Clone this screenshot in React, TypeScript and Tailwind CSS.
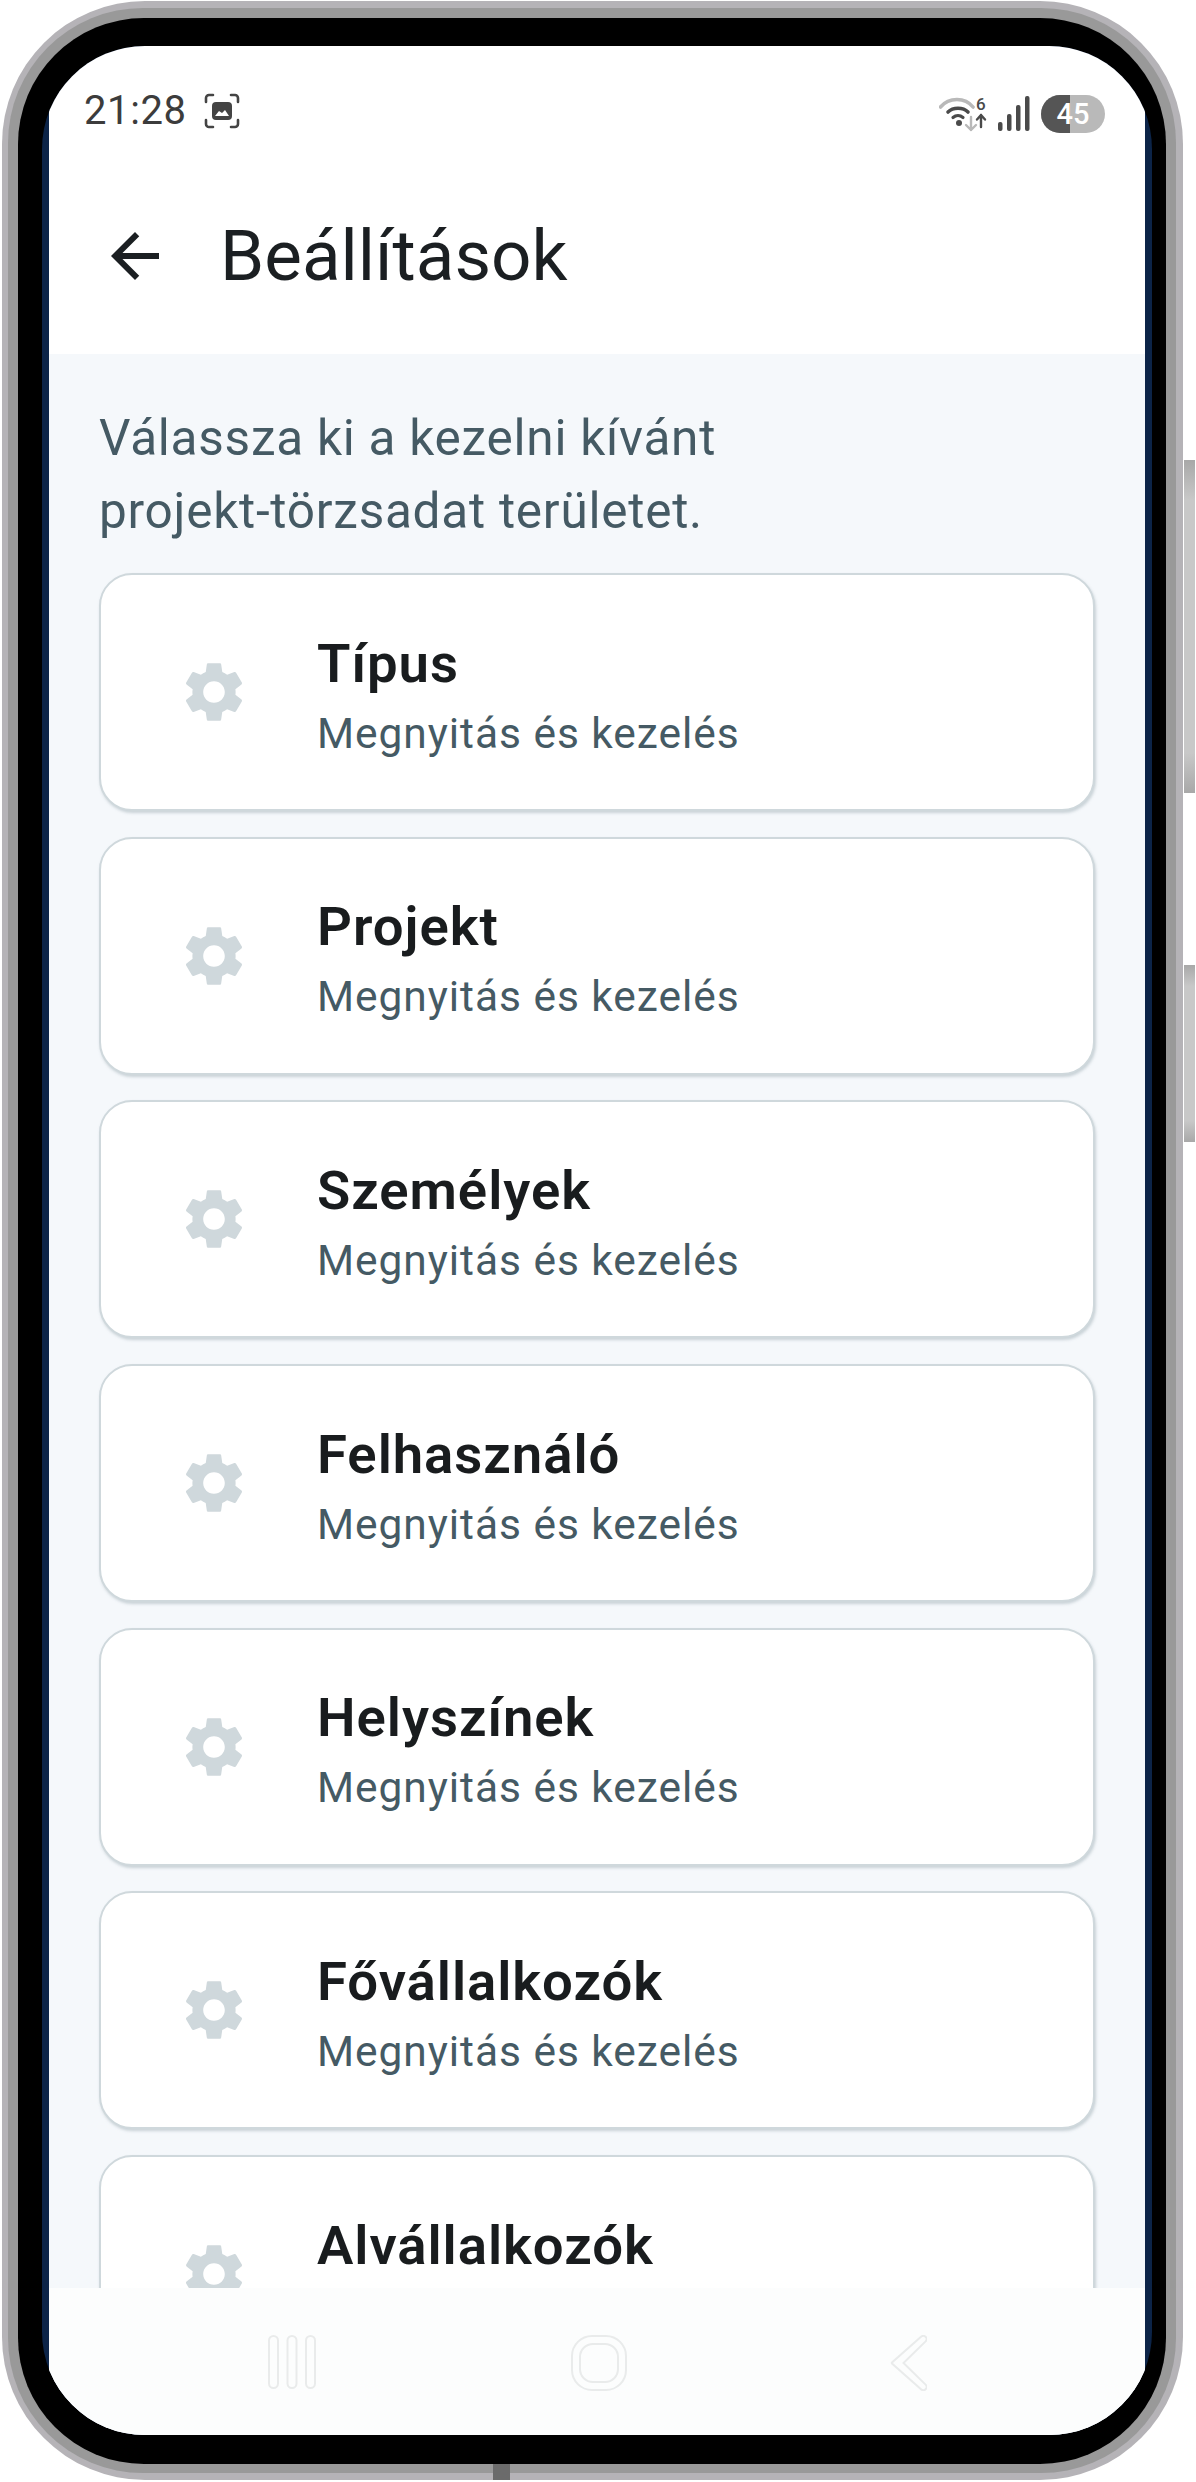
const items = ["Típus", "Projekt", "Személyek", "Felhasználó", "Helyszínek", "Fővállalkozók", "Alvállalkozók"];

function Gear() {
  return (
    <svg viewBox="0 0 24 24" className="h-[72px] w-[72px] shrink-0 fill-[#cfd8dc]">
      <path d="M19.14 12.94c.04-.3.06-.61.06-.94 0-.32-.02-.64-.07-.94l2.03-1.58c.18-.14.23-.41.12-.61l-1.92-3.32c-.12-.22-.37-.29-.59-.22l-2.39.96c-.5-.38-1.03-.7-1.62-.94l-.36-2.54c-.04-.24-.24-.41-.48-.41h-3.84c-.24 0-.43.17-.47.41l-.36 2.54c-.59.24-1.13.57-1.62.94l-2.39-.96c-.22-.08-.47 0-.59.22L2.74 8.87c-.12.21-.08.47.12.61l2.03 1.58c-.05.3-.09.63-.09.94s.02.64.07.94l-2.03 1.58c-.18.14-.23.41-.12.61l1.92 3.32c.12.22.37.29.59.22l2.39-.96c.5.38 1.03.7 1.62.94l.36 2.54c.05.24.24.41.48.41h3.84c.24 0 .44-.17.47-.41l.36-2.54c.59-.24 1.13-.56 1.62-.94l2.39.96c.22.08.47 0 .59-.22l1.92-3.32c.12-.22.07-.47-.12-.61l-2.01-1.58zM12 15.6c-1.98 0-3.6-1.62-3.6-3.6s1.62-3.6 3.6-3.6 3.6 1.62 3.6 3.6-1.62 3.6-3.6 3.6z" />
    </svg>
  );
}

function StatusBar() {
  return (
    <div className="flex h-[90px] shrink-0 items-end justify-between pl-[35px] pr-[40px]">
      <div className="flex items-center gap-[17px] pb-[5px]">
        <span className="text-[40px] leading-[40px] font-normal tracking-[0.6px] text-[#3c3c3c]">21:28</span>
        <svg viewBox="0 0 36 36" className="h-[36px] w-[36px]" fill="none">
          <path d="M2 9V5a3 3 0 0 1 3-3h4M27 2h4a3 3 0 0 1 3 3v4M34 27v4a3 3 0 0 1-3 3h-4M9 34H5a3 3 0 0 1-3-3v-4" stroke="#444444" strokeWidth="2.6" strokeLinecap="round" />
          <rect x="8" y="9" width="20" height="18" rx="4" fill="#444444" />
          <path d="M11 23l4-5 3 2 3-3 4 6z" fill="#ffffff" />
        </svg>
      </div>
      <div className="flex items-center gap-[11px] pb-[3px]">
        <svg viewBox="0 0 48 38" className="h-[38px] w-[48px]" fill="none">
          <path d="M1.5 12C10 2 26 2 34 12" stroke="#b9b9b9" strokeWidth="3.6" strokeLinecap="round" />
          <path d="M9 17c5-5 15-5 20 0" stroke="#4a4a4a" strokeWidth="3.6" strokeLinecap="round" />
          <path d="M14 22.5c3-2.5 7-2.5 10 0" stroke="#4a4a4a" strokeWidth="3.2" strokeLinecap="round" />
          <circle cx="20" cy="28" r="3" fill="#4a4a4a" />
          <path d="M32 22v13M27 30l5 5 5-5" stroke="#b9b9b9" strokeWidth="2.4" strokeLinecap="round" strokeLinejoin="round" />
          <path d="M42 32V20M38 24.5l4-4.5 4 4.5" stroke="#4a4a4a" strokeWidth="2.4" strokeLinecap="round" strokeLinejoin="round" />
          <text x="37" y="15" fontSize="17" fontWeight="500" fill="#4a4a4a" fontFamily="Roboto, sans-serif">6</text>
        </svg>
        <svg viewBox="0 0 32 36" className="h-[36px] w-[32px]" fill="#4a4a4a">
          <rect x="0" y="26" width="4.5" height="9" rx="2" />
          <rect x="9" y="18" width="4.5" height="17" rx="2" />
          <rect x="18" y="9" width="4.5" height="26" rx="2" />
          <rect x="27" y="0" width="4.5" height="35" rx="2" />
        </svg>
        <div className="relative flex h-[38px] w-[64px] overflow-hidden rounded-full bg-[#b9b9b9]">
          <div className="h-full w-[29px] bg-[#555555]" />
          <span className="absolute inset-0 text-center text-[29px] leading-[38px] font-medium text-white">45</span>
        </div>
      </div>
    </div>
  );
}

function Card({ title }: { title: string }) {
  return (
    <div className="flex h-[238px] shrink-0 items-center gap-[67px] rounded-[33px] border-2 border-[#cfd8dc] bg-white pl-[77px] shadow-[1px_2px_3px_rgba(120,140,150,0.35)]">
      <Gear />
      <div className="flex flex-col pt-[12px]">
        <span className="text-[54.5px] leading-[60px] font-semibold tracking-[0.95px] text-[#191c1e]">{title}</span>
        <span className="mt-[11px] text-[42.5px] leading-[60px] tracking-[0.95px] text-[#455a64]">Megnyitás és kezelés</span>
      </div>
    </div>
  );
}

function NavBar() {
  return (
    <div className="flex h-[147px] shrink-0 items-start bg-[#fcfdfd] pt-[47px] pl-[219px]">
      <svg viewBox="0 0 48 54" className="h-[54px] w-[48px]" fill="none" stroke="#e9ebeb" strokeWidth="2">
        <rect x="1" y="1" width="9" height="52" rx="4.5" />
        <rect x="19.5" y="1" width="9" height="52" rx="4.5" />
        <rect x="38" y="1" width="9" height="52" rx="4.5" />
      </svg>
      <svg viewBox="0 0 56 56" className="ml-[255px] h-[56px] w-[56px]" fill="none" stroke="#e9ebeb" strokeWidth="2">
        <rect x="1" y="1" width="54" height="54" rx="20" />
        <rect x="9" y="9" width="38" height="38" rx="13" />
      </svg>
      <svg viewBox="0 0 38 56" className="ml-[262px] h-[56px] w-[38px]" fill="none" stroke="#e9ebeb" strokeWidth="2">
        <path d="M32 1.8a3.2 3.2 0 0 1 4.6 4.6L14.5 28l22.1 21.6a3.2 3.2 0 0 1-4.6 4.6L3 28.6a1 1 0 0 1 0-1.2z" />
      </svg>
    </div>
  );
}

export default function App() {
  return (
    <div className="relative h-[2482px] w-[1196px] overflow-hidden bg-white font-['Roboto',sans-serif]">
      {/* side buttons */}
      <div className="absolute left-[1184px] top-[460px] h-[333px] w-[11px] bg-[linear-gradient(#a8a8a8,#c8c8c8_12%,#c8c8c8_88%,#a8a8a8)]" />
      <div className="absolute left-[1184px] top-[965px] h-[177px] w-[11px] bg-[linear-gradient(#a8a8a8,#c8c8c8_12%,#c8c8c8_88%,#a8a8a8)]" />

      {/* phone frame */}
      <div className="ml-[2px] mt-[1px] h-[2479px] w-[1181px] rounded-[143px] bg-[#b5b3b7] pb-[7px] pl-[6px] pr-[7px] pt-[7px]">
        <div className="h-full w-full rounded-[135px] bg-[#999999] pb-[9px] pl-[10px] pr-[10px] pt-[10px]">
          <div className="h-full w-full rounded-[126px] bg-black pb-[29px] pl-[24px] pr-[14px] pt-[28px]">
            <div className="h-full w-full overflow-hidden rounded-[103px] bg-[#0c2448] px-[7px]">
              <div className="flex h-full w-full flex-col bg-white">
                <StatusBar />
                <div className="flex h-[218px] shrink-0 items-start pl-[50px] pt-[84px]">
                  <svg viewBox="0 0 24 24" className="h-[72px] w-[72px] fill-[#1b1f22]">
                    <path d="M20 11H7.83l5.59-5.59L12 4l-8 8 8 8 1.41-1.41L7.83 13H20v-2z" />
                  </svg>
                  <h1 className="ml-[49px] mt-[-7px] text-[71px] leading-[86px] font-normal text-[#1b1f22]">Beállítások</h1>
                </div>
                <div className="min-h-0 flex-1 overflow-hidden bg-[#f5f8fb] px-[50px]">
                  <p className="mt-[48px] text-[49.5px] leading-[73px] tracking-[0.75px] text-[#455a64]">
                    Válassza ki a kezelni kívánt
                    <br />
                    projekt-törzsadat területet.
                  </p>
                  <div className="mt-[25px] flex flex-col gap-[25.7px]">
                    {items.map((t) => (
                      <Card key={t} title={t} />
                    ))}
                  </div>
                </div>
                <NavBar />
              </div>
            </div>
          </div>
        </div>
      </div>

      {/* bottom notch */}
      <div className="absolute left-[493px] top-[2464px] h-[16px] w-[17px] bg-[#6b6b6b]" />
    </div>
  );
}
